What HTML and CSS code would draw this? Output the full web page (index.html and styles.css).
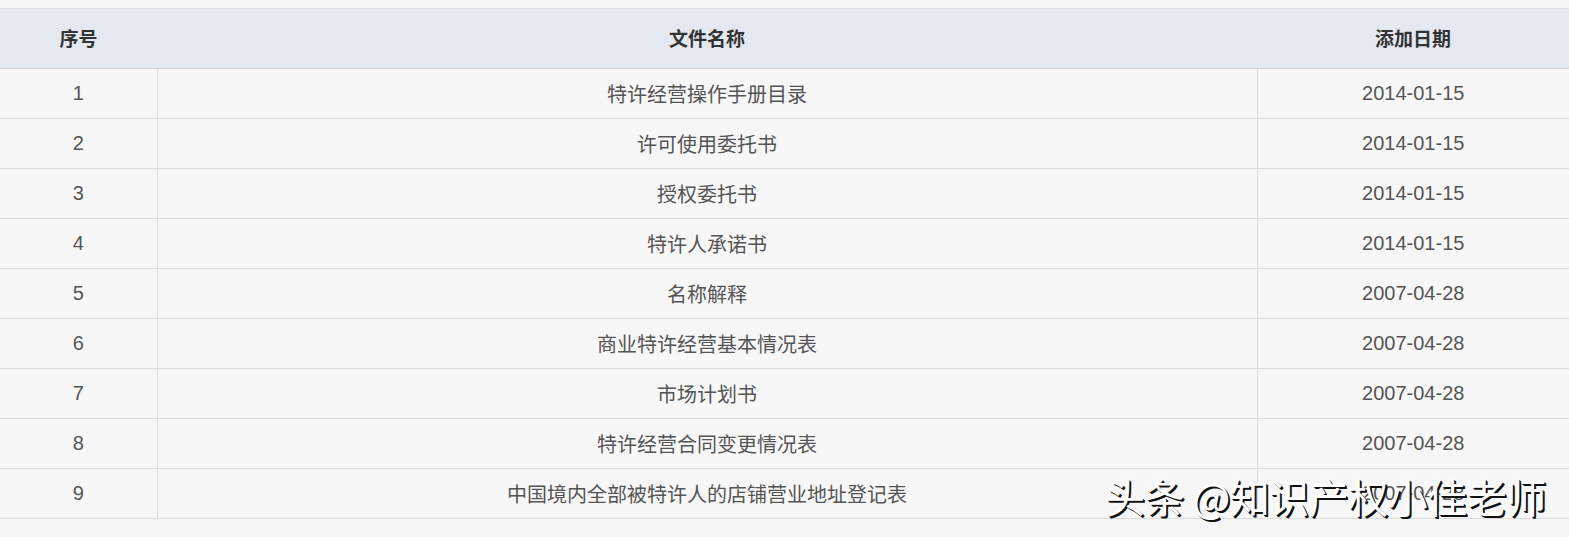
FILE: index.html
```html
<!DOCTYPE html>
<html lang="zh">
<head>
<meta charset="utf-8">
<link rel="stylesheet" href="styles.css">
</head>
<body>
<div class="page">
  <table class="files">
    <colgroup><col class="c-no"><col class="c-name"><col class="c-date"></colgroup>
    <thead>
      <tr><th>序号</th><th>文件名称</th><th>添加日期</th></tr>
    </thead>
    <tbody>
      <tr><td>1</td><td>特许经营操作手册目录</td><td>2014-01-15</td></tr>
      <tr><td>2</td><td>许可使用委托书</td><td>2014-01-15</td></tr>
      <tr><td>3</td><td>授权委托书</td><td>2014-01-15</td></tr>
      <tr><td>4</td><td>特许人承诺书</td><td>2014-01-15</td></tr>
      <tr><td>5</td><td>名称解释</td><td>2007-04-28</td></tr>
      <tr><td>6</td><td>商业特许经营基本情况表</td><td>2007-04-28</td></tr>
      <tr><td>7</td><td>市场计划书</td><td>2007-04-28</td></tr>
      <tr><td>8</td><td>特许经营合同变更情况表</td><td>2007-04-28</td></tr>
      <tr><td>9</td><td>中国境内全部被特许人的店铺营业地址登记表</td><td>2007-04-28</td></tr>
    </tbody>
  </table>
  <div class="watermark">头条 @知识产权小佳老师</div>
</div>
</body>
</html>
```

FILE: styles.css
```css
html, body {
  margin: 0;
  padding: 0;
  background: #f5f5f5;
}
.page {
  position: relative;
  padding-top: 8px;
  height: 529px;
  font-family: "Liberation Sans", "Noto Sans CJK SC", sans-serif;
}
.files {
  width: 1569px;
  border-collapse: collapse;
  table-layout: fixed;
  background: #f7f7f7;
}
.c-no { width: 157px; }
.c-date { width: 312px; }
.files th {
  height: 56px;
  padding: 0 0 3px;
  background: #e4e8f0;
  border-top: 1px solid #dde1e8;
  border-bottom: 1px solid #cfd3d9;
  color: #333;
  font-size: 19px;
  font-weight: bold;
  text-align: center;
}
.files td {
  height: 48px;
  padding: 0 0 1px;
  border-bottom: 1px solid #dcdcdc;
  color: #555;
  font-size: 20px;
  text-align: center;
}
.files td + td {
  border-left: 1px solid #dcdcdc;
}
.watermark {
  position: absolute;
  left: 1105px;
  top: 472px;
  font-family: "Noto Sans CJK SC", sans-serif;
  font-size: 40px;
  line-height: 48px;
  letter-spacing: -0.5px;
  color: #fff;
  text-shadow: 2px 2px 0 #111, 1px 1px 0 #222;
  white-space: nowrap;
}
```
